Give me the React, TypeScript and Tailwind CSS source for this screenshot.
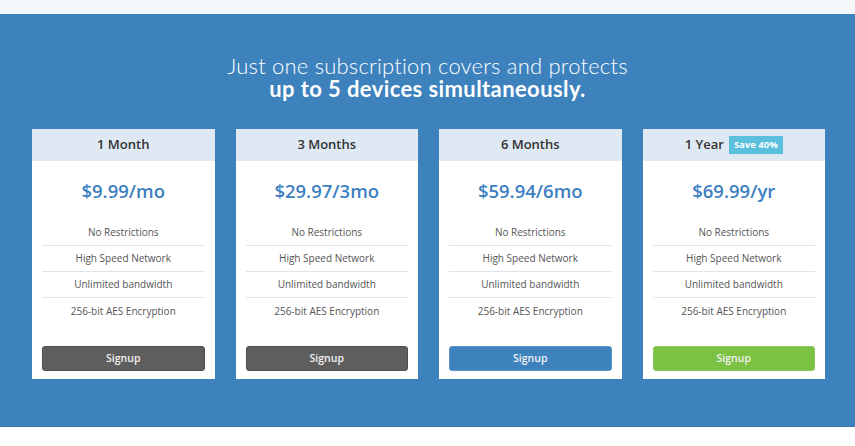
const plans = [
  { name: "1 Month", price: "$9.99/mo", button: "bg-[#5e5e5e] border-[#4f4f4f]" },
  { name: "3 Months", price: "$29.97/3mo", button: "bg-[#5e5e5e] border-[#4f4f4f]" },
  { name: "6 Months", price: "$59.94/6mo", button: "bg-[#3d82bd] border-[#5a96c9]" },
  { name: "1 Year", price: "$69.99/yr", button: "bg-[#7bc142] border-[#8cc95a]", badge: "Save 40%" },
];

const features = ["No Restrictions", "High Speed Network", "Unlimited bandwidth", "256-bit AES Encryption"];

const App = () => {
  return (
    <div className="w-[855px] h-[446px] bg-white font-['Open_Sans',sans-serif]">
      {/* top strip */}
      <div className="h-[14px] bg-[#f4f7fa]" />

      {/* pricing section */}
      <section className="h-[413px] bg-[#3d82bd] border-b border-[#3676ad] pt-[40px]">
        <h2 className="text-center text-white text-[22px] leading-[23px] font-['Lato',sans-serif]">
          <span className="font-light tracking-[0.2px]">Just one subscription covers and protects</span>
          <br />
          <span className="font-bold tracking-[0.4px]">up to 5 devices simultaneously.</span>
        </h2>

        <div className="ml-[32px] mt-[29px] w-[793px] grid grid-cols-4 gap-[21px]">
          {plans.map((plan) => (
            <div key={plan.name} className="bg-white h-[250px] flex flex-col">
              <div className="h-[32px] bg-[#dfe9f3] flex items-center justify-center gap-[5px]">
                <span className="text-[13px] font-semibold text-[#333]">{plan.name}</span>
                {plan.badge && (
                  <span className="h-[18px] px-[5px] bg-[#5bc0de] text-white text-[9.5px] font-bold flex items-center">
                    {plan.badge}
                  </span>
                )}
              </div>
              <div className="h-[59px] flex items-center justify-center text-[18.5px] font-semibold text-[#3d7fc1]">
                {plan.price}
              </div>
              <ul className="px-[10px]">
                {features.map((f, i) => (
                  <li
                    key={f}
                    className={`h-[26px] flex items-center justify-center text-[10px] text-[#555] ${
                      i < features.length - 1 ? "border-b border-[#dde6ee]" : ""
                    }`}
                  >
                    {f}
                  </li>
                ))}
              </ul>
              <div className="px-[10px] mt-[20px]">
                <button
                  className={`w-full h-[25px] rounded-[3px] border text-[10.5px] font-semibold text-[#f2f2f2] ${plan.button}`}
                >
                  Signup
                </button>
              </div>
            </div>
          ))}
        </div>
      </section>
    </div>
  );
};

export default App;
